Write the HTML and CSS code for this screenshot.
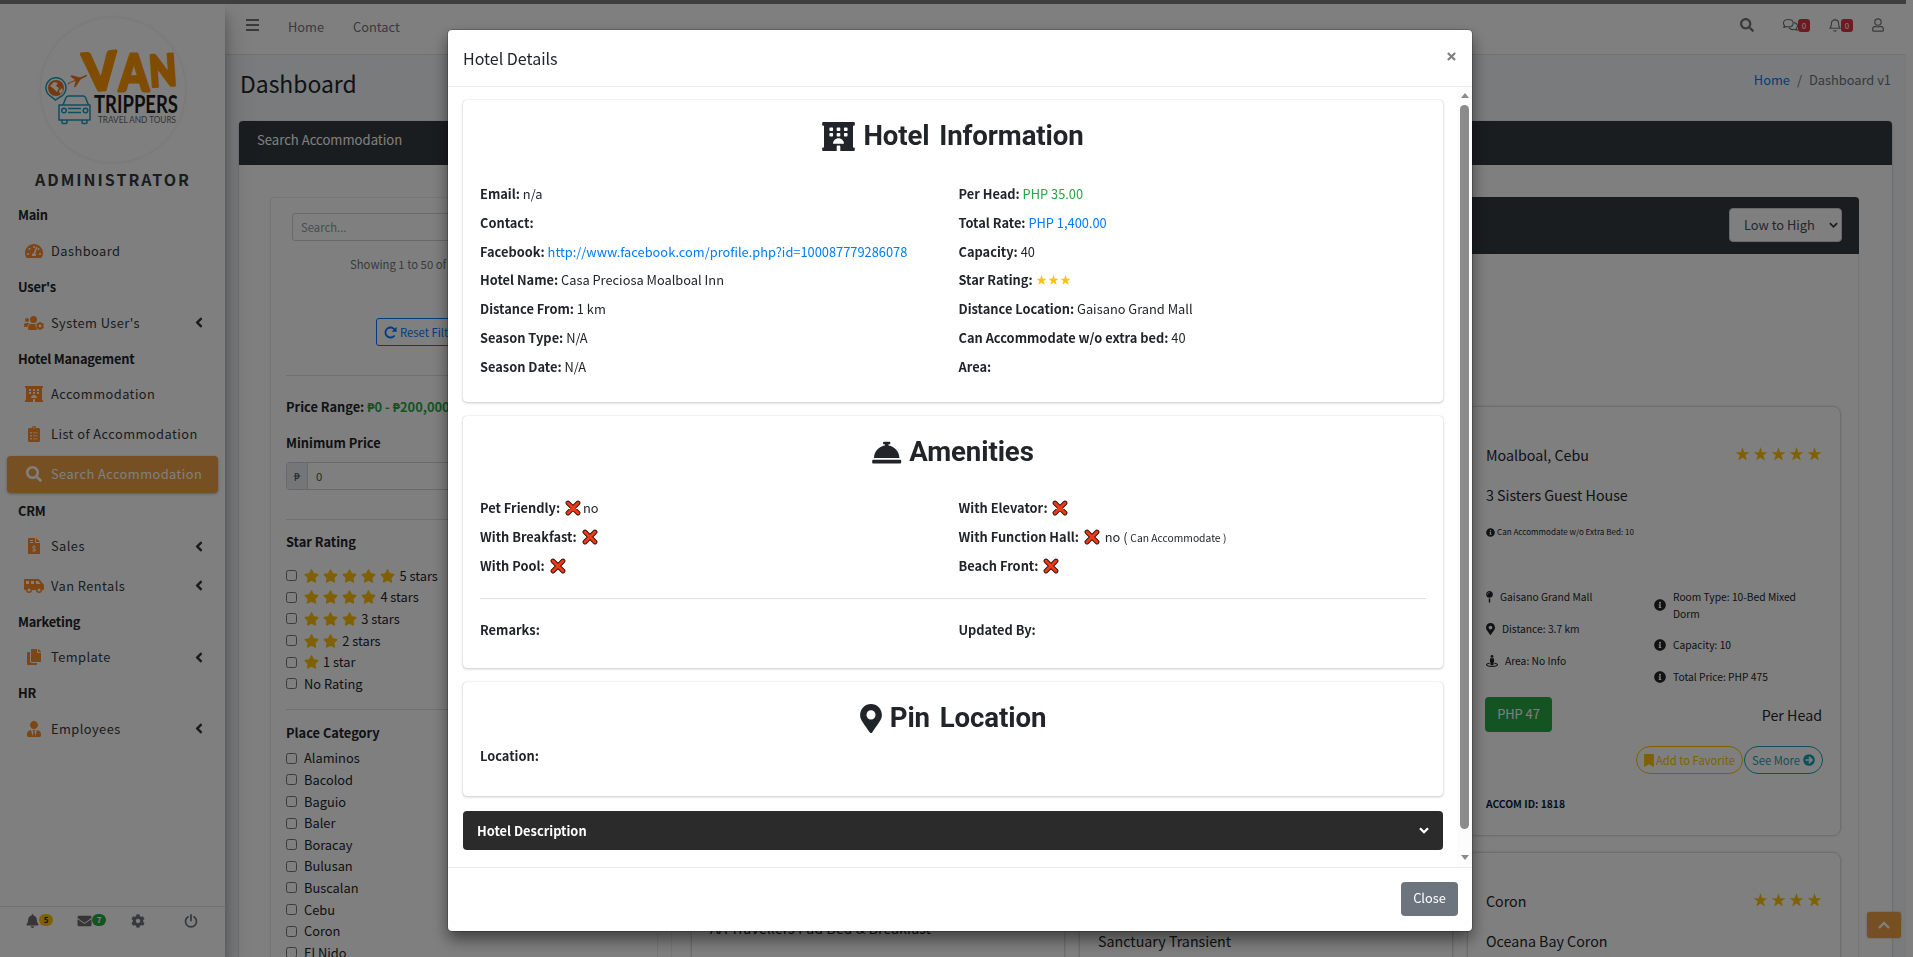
FILE: index.html
```html
<!DOCTYPE html>
<html lang="en">
<head>
<meta charset="utf-8">
<title>Van Trippers - Dashboard</title>
<link rel="stylesheet" href="styles.css">
</head>
<body>
<svg class="defs" aria-hidden="true">
  <symbol id="search" viewBox="0 0 512 512"><path d="M505 442.7L405.300 343c-4.500-4.500-10.600-7-17-7H372c27.600-35.300 44-79.700 44-128C416 93.100 322.900 0 208 0S0 93.100 0 208s93.100 208 208 208c48.300 0 92.700-16.400 128-44v16.300c0 6.400 2.500 12.500 7 17l99.700 99.700c9.400 9.400 24.600 9.400 33.900 0l28.300-28.300c9.400-9.400 9.400-24.600.1-34zM208 336c-70.700 0-128-57.200-128-128 0-70.700 57.200-128 128-128 70.700 0 128 57.200 128 128 0 70.700-57.200 128-128 128z"/></symbol>
  <symbol id="star" viewBox="0 0 576 512"><path d="M259.300 17.800L194 150.200 47.900 171.500c-26.200 3.800-36.700 36.100-17.700 54.600l105.700 103-25 145.500c-4.500 26.300 23.200 46 46.400 33.700L288 439.600l130.700 68.700c23.200 12.200 50.900-7.400 46.400-33.700l-25-145.500 105.700-103c19-18.500 8.500-50.800-17.700-54.600L382 150.200 316.700 17.800c-11.700-23.600-45.600-23.900-57.400 0z"/></symbol>
  <symbol id="sharpstar" viewBox="0 0 20 20"><path d="M10 .8l2.300 6.700h7l-5.600 4.200 2.100 6.900L10 14.500l-5.800 4.100 2.100-6.900L.7 7.500h7z"/></symbol>
  <symbol id="marker" viewBox="0 0 384 512"><path d="M172.268 501.670C26.970 291.031 0 269.413 0 192 0 85.961 85.961 0 192 0s192 85.961 192 192c0 77.413-26.970 99.031-172.268 309.670-9.535 13.774-29.930 13.773-39.464 0zM192 272c44.183 0 80-35.817 80-80s-35.817-80-80-80-80 35.817-80 80 35.817 80 80 80z"/></symbol>
  <symbol id="info" viewBox="0 0 512 512"><path d="M256 8C119.043 8 8 119.083 8 256c0 136.997 111.043 248 248 248s248-111.003 248-248C504 119.083 392.957 8 256 8zm0 110c23.196 0 42 18.804 42 42s-18.804 42-42 42-42-18.804-42-42 18.804-42 42-42zm56 254c0 6.627-5.373 12-12 12h-88c-6.627 0-12-5.373-12-12v-24c0-6.627 5.373-12 12-12h12v-64h-12c-6.627 0-12-5.373-12-12v-24c0-6.627 5.373-12 12-12h64c6.627 0 12 5.373 12 12v100h12c6.627 0 12 5.373 12 12v24z"/></symbol>
  <symbol id="left" viewBox="0 0 256 512"><path d="M31.700 239l136-136c9.400-9.400 24.600-9.400 33.900 0l22.600 22.600c9.400 9.400 9.400 24.600 0 33.900L127.900 256l96.400 96.400c9.400 9.400 9.400 24.600 0 33.900L201.700 409c-9.400 9.400-24.600 9.400-33.900 0l-136-136c-9.500-9.400-9.500-24.600-.1-34z"/></symbol>
  <symbol id="bell" viewBox="0 0 448 512"><path d="M224 512c35.320 0 63.970-28.650 63.970-64H160.030c0 35.350 28.650 64 63.970 64zm215.390-149.710c-19.320-20.760-55.470-51.990-55.470-154.290 0-77.700-54.480-139.900-127.940-155.160V32c0-17.670-14.320-32-31.980-32s-31.980 14.330-31.980 32v20.840C118.560 68.100 64.080 130.300 64.080 208c0 102.300-36.150 133.530-55.470 154.290-6 6.450-8.660 14.160-8.610 21.710.11 16.400 12.980 32 32.100 32h383.800c19.120 0 32-15.600 32.100-32 .05-7.550-2.610-15.270-8.610-21.710z"/></symbol>
  <symbol id="envelope" viewBox="0 0 512 512"><path d="M502.300 190.800c3.900-3.100 9.700-.2 9.700 4.700V400c0 26.500-21.500 48-48 48H48c-26.500 0-48-21.500-48-48V195.600c0-5 5.700-7.800 9.700-4.700 22.400 17.400 52.100 39.500 154.100 113.600 21.100 15.400 56.700 47.800 92.200 47.600 35.700.3 72-32.800 92.300-47.600 102-74.100 131.600-96.300 154-113.700zM256 320c23.200.4 56.600-29.200 73.400-41.400 132.700-96.300 142.800-104.700 173.400-128.700 5.800-4.500 9.200-11.500 9.200-18.900v-19c0-26.500-21.500-48-48-48H48c-26.500 0-48 21.500-48 48v19c0 7.400 3.400 14.300 9.200 18.900 30.600 23.900 40.700 32.400 173.400 128.700 16.800 12.200 50.200 41.800 73.400 41.400z"/></symbol>
  <symbol id="cog" viewBox="0 0 512 512"><path d="M487.400 315.700l-42.600-24.600c4.300-23.200 4.300-47 0-70.200l42.600-24.600c4.900-2.800 7.100-8.600 5.500-14-11.100-35.600-30-67.800-54.700-94.600-3.800-4.100-10-5.100-14.800-2.300L380.800 110c-17.900-15.400-38.500-27.300-60.800-35.100V25.800c0-5.600-3.900-10.500-9.400-11.700-36.700-8.200-74.300-7.800-109.200 0-5.500 1.200-9.400 6.100-9.400 11.700V75c-22.200 7.900-42.800 19.800-60.800 35.100L88.700 85.500c-4.900-2.800-11-1.900-14.800 2.300-24.700 26.700-43.600 58.900-54.700 94.600-1.700 5.400.6 11.200 5.500 14L67.300 221c-4.300 23.200-4.300 47 0 70.200l-42.600 24.600c-4.900 2.800-7.100 8.600-5.500 14 11.100 35.600 30 67.800 54.700 94.600 3.800 4.100 10 5.100 14.800 2.300l42.600-24.600c17.900 15.400 38.500 27.300 60.800 35.100v49.200c0 5.600 3.900 10.500 9.400 11.700 36.700 8.200 74.300 7.800 109.200 0 5.500-1.200 9.400-6.100 9.400-11.700v-49.200c22.200-7.900 42.800-19.800 60.800-35.100l42.600 24.600c4.900 2.800 11 1.900 14.800-2.300 24.700-26.700 43.600-58.900 54.700-94.600 1.500-5.500-.7-11.300-5.600-14.100zM256 336c-44.100 0-80-35.900-80-80s35.900-80 80-80 80 35.900 80 80-35.900 80-80 80z"/></symbol>
  <symbol id="power" viewBox="0 0 16 16"><path fill="none" stroke="currentColor" stroke-width="2" stroke-linecap="round" d="M4.600 3.200a6.300 6.300 0 1 0 6.800 0M8 1v6.500"/></symbol>
  <symbol id="bells" viewBox="0 0 576 512"><path d="M288 130.540V112h16c8.840 0 16-7.160 16-16V80c0-8.840-7.160-16-16-16h-96c-8.840 0-16 7.160-16 16v16c0 8.840 7.160 16 16 16h16v18.540C115.490 146.110 32 239.180 32 352h448c0-112.820-83.490-205.890-192-221.460zM496 384H16c-8.840 0-16 7.160-16 16v32c0 8.840 7.160 16 16 16h480c8.840 0 16-7.160 16-16v-32c0-8.840-7.160-16-16-16z"/></symbol>
  <symbol id="hotel" viewBox="0 0 576 512"><path d="M560 64c8.840 0 16-7.160 16-16V16c0-8.840-7.160-16-16-16H16C7.160 0 0 7.160 0 16v32c0 8.840 7.160 16 16 16h15.980v384H16c-8.840 0-16 7.160-16 16v32c0 8.840 7.160 16 16 16h240v-80c0-8.800 7.200-16 16-16h32c8.800 0 16 7.200 16 16v80h240c8.840 0 16-7.160 16-16v-32c0-8.840-7.160-16-16-16h-16V64h16zm-304 44.800c0-6.400 6.400-12.800 12.800-12.800h38.400c6.400 0 12.800 6.400 12.800 12.800v38.400c0 6.400-6.400 12.800-12.800 12.800h-38.400c-6.400 0-12.800-6.400-12.800-12.800v-38.400zm0 96c0-6.400 6.400-12.800 12.800-12.800h38.400c6.400 0 12.800 6.400 12.800 12.800v38.400c0 6.400-6.400 12.800-12.800 12.800h-38.400c-6.400 0-12.800-6.400-12.800-12.800v-38.400zm-128-96c0-6.400 6.400-12.800 12.800-12.800h38.400c6.400 0 12.800 6.400 12.800 12.800v38.400c0 6.400-6.400 12.800-12.800 12.800h-38.400c-6.400 0-12.800-6.400-12.800-12.800v-38.400zM179.200 256h-38.400c-6.400 0-12.800-6.400-12.800-12.800v-38.400c0-6.400 6.400-12.800 12.800-12.800h38.400c6.400 0 12.800 6.400 12.800 12.800v38.400c0 6.400-6.400 12.800-12.800 12.800zM192 384c0-53.020 42.980-96 96-96s96 42.980 96 96H192zm256-140.800c0 6.400-6.400 12.800-12.800 12.800h-38.400c-6.400 0-12.800-6.400-12.800-12.800v-38.400c0-6.400 6.400-12.800 12.800-12.800h38.400c6.400 0 12.800 6.400 12.800 12.800v38.400zm0-96c0 6.400-6.400 12.800-12.800 12.800h-38.400c-6.400 0-12.800-6.400-12.800-12.800v-38.400c0-6.400 6.400-12.800 12.800-12.800h38.400c6.400 0 12.800 6.400 12.800 12.800v38.400z"/></symbol>
  <symbol id="gauge" viewBox="0 0 576 512"><path fill-rule="evenodd" d="M288 32C129 32 0 161 0 320c0 52.800 14.200 102.300 39 144.800 5.600 9.600 16.300 15.200 27.500 15.200h443c11.100 0 21.800-5.600 27.400-15.200C561.800 422.300 576 372.800 576 320 576 161 447 32 288 32zM288 96a32 32 0 1 1 0 64 32 32 0 0 1 0-64zM96 320a32 32 0 1 1 0 64 32 32 0 0 1 0-64zM144 160a32 32 0 1 1 0 64 32 32 0 0 1 0-64zM480 320a32 32 0 1 1 0 64 32 32 0 0 1 0-64zM432 160a32 32 0 1 1 0 64 32 32 0 0 1 0-64zM391 152l-61 184c13 11 22 28 22 48 0 12-3 23-9 32H233c-6-9-9-20-9-32 0-34 26-61 60-64l61-184c14-24 48-10 46 16z"/></symbol>
  <symbol id="users" viewBox="0 0 640 512"><circle cx="96" cy="160" r="64"/><circle cx="304" cy="144" r="112"/><path d="M0 320c0-40 25-64 64-64h64c20 0 36 8 48 20-40 24-68 60-72 108H32c-18 0-32-14-32-32zM128 448c-2-100 36-164 110-168 40 18 90 18 130 2-18 40 0 60 10 70-14 48 10 90 46 108 0 10 0 20-4 20H176c-27 0-48-8-48-32z"/><circle cx="512" cy="352" r="78" fill="none" stroke="currentColor" stroke-width="64"/><path fill="none" stroke="currentColor" stroke-width="50" d="M512 224v40M512 440v40M401 288l35 20M588 396l35 20M401 416l35-20M588 308l35-20"/></symbol>
  <symbol id="clip" viewBox="0 0 384 512"><path fill-rule="evenodd" d="M336 64h-80a64 64 0 0 0-128 0H48c-26 0-48 22-48 48v352c0 26 22 48 48 48h288c26 0 48-22 48-48V112c0-26-22-48-48-48zM192 40a24 24 0 1 1 0 48 24 24 0 0 1 0-48zM72 192h48v48H72zM160 204h144v24H160zM72 288h48v48H72zM160 300h144v24H160zM72 384h48v48H72zM160 396h144v24H160z"/></symbol>
  <symbol id="invoice" viewBox="0 0 384 512"><path fill-rule="evenodd" d="M24 0h200v136c0 13 11 24 24 24h136v328c0 13-11 24-24 24H24c-13 0-24-11-24-24V24C0 11 11 0 24 0zM64 64v32h96V64zM64 128v32h96v-32zM256 0l128 128H256z"/><path fill="none" stroke="#fff" stroke-width="28" d="M246 280c-20-20-104-26-104 22 0 50 108 22 108 74 0 48-84 48-112 20M192 232v210"/></symbol>
  <symbol id="van" viewBox="0 0 640 512"><path fill-rule="evenodd" d="M628 210L494 50c-9-11-23-18-37-18H32C14 32 0 46 0 64v288c0 18 14 32 32 32h32a96 96 0 0 0 192 0h128a96 96 0 0 0 192 0h32c18 0 32-14 32-32V241c0-11-4-22-12-31zM64 192V96h96v96zM160 432a48 48 0 1 1 0-96 48 48 0 0 1 0 96zM320 192h-96V96h96zM480 432a48 48 0 1 1 0-96 48 48 0 0 1 0 96zM384 192V96h66l80 96z"/></symbol>
  <symbol id="copy" viewBox="0 0 448 512"><path d="M320 448v40c0 13.255-10.745 24-24 24H24c-13.255 0-24-10.745-24-24V120c0-13.255 10.745-24 24-24h72v296c0 30.879 25.121 56 56 56h168zm0-344V0H152c-13.255 0-24 10.745-24 24v368c0 13.255 10.745 24 24 24h272c13.255 0 24-10.745 24-24V128H344c-13.200 0-24-10.800-24-24zm120.971-31.029L375.029 7.029A24 24 0 0 0 358.059 0H352v96h96v-6.059a24 24 0 0 0-7.029-16.970z"/></symbol>
  <symbol id="tie" viewBox="0 0 448 512"><path d="M224 256c70.700 0 128-57.300 128-128S294.700 0 224 0 96 57.300 96 128s57.300 128 128 128zm95.800 32.600L272 480l-32-136 32-56h-96l32 56-32 136-47.800-191.400C56.900 292 0 350.300 0 422.400V464c0 26.500 21.500 48 48 48h352c26.500 0 48-21.500 48-48v-41.600c0-72.100-56.900-130.400-128.200-133.800z"/></symbol>
  <symbol id="bookmark" viewBox="0 0 384 512"><path d="M0 512V48C0 21.490 21.490 0 48 0h288c26.510 0 48 21.490 48 48v464L192 400 0 512z"/></symbol>
  <symbol id="pin" viewBox="0 0 288 512"><path d="M112 316.940v156.690l22.020 33.020c4.750 7.120 15.220 7.120 19.970 0L176 473.630V316.940c-10.390 1.920-21.060 3.060-32 3.060s-21.610-1.140-32-3.060zM144 0C64.470 0 0 64.470 0 144s64.470 144 144 144 144-64.470 144-144S223.530 0 144 0zm0 76c-37.500 0-68 30.500-68 68 0 6.620-5.380 12-12 12s-12-5.380-12-12c0-50.730 41.280-92 92-92 6.620 0 12 5.380 12 12s-5.380 12-12 12z"/></symbol>
  <symbol id="street" viewBox="0 0 512 512"><circle cx="256" cy="60" r="60"/><path d="M208 136h96c22 0 40 18 40 40v104c0 13-9 22-20 26v104c0 13-10 22-22 22h-92c-12 0-22-9-22-22V306c-11-4-20-13-20-26V176c0-22 18-40 40-40z"/><path fill="none" stroke="currentColor" stroke-width="44" stroke-linecap="round" d="M140 350C60 362 22 385 22 410c0 45 110 78 234 78s234-33 234-78c0-25-38-48-118-60"/></symbol>
  <symbol id="arrow" viewBox="0 0 16 16"><path fill-rule="evenodd" d="M8 .2a7.800 7.800 0 1 1 0 15.600A7.800 7.800 0 0 1 8 .2zM7.200 4.600l2 2.300H3.400v2.200h5.800l-2 2.300 1.600 1.500L13.400 8 8.800 3.100z"/></symbol>
  <symbol id="redo" viewBox="0 0 16 16"><path fill="none" stroke="currentColor" stroke-width="2.300" d="M13 11.600a6.200 6.200 0 1 1 .2-6.900"/><path d="M15.500 1v6h-6z"/></symbol>
  <symbol id="cross" viewBox="0 0 16 16"><path fill="none" stroke="#2b1512" stroke-width="4.800" stroke-linecap="round" d="M3 3l10 10M13 3L3 13"/><path fill="none" stroke="#f03a17" stroke-width="3" stroke-linecap="round" d="M3 3l10 10M13 3L3 13"/></symbol>
  <symbol id="comments" viewBox="0 0 18 16"><g fill="none" stroke="currentColor" stroke-width="1.300" stroke-linejoin="round"><path d="M6.500 1.700c3.300 0 5.600 1.800 5.600 4.200s-2.300 4.200-5.600 4.200c-.9 0-1.700-.1-2.400-.4-.8.600-1.900 1-3 1 .6-.7 1-1.400 1.100-2.200C1.400 7.800.9 6.900.9 5.900c0-2.400 2.300-4.200 5.600-4.200z"/><path d="M13 5.300c2.400.4 4 1.700 4 3.700 0 1-.5 1.900-1.300 2.600.1.800.5 1.500 1.100 2.200-1.100 0-2.200-.4-3-1-2.500.8-5.300 0-6.400-1.800"/></g></symbol>
  <symbol id="bello" viewBox="0 0 14 16"><path fill="none" stroke="currentColor" stroke-width="1.300" stroke-linejoin="round" d="M7 .6v1.300M7 2c2.600 0 4.200 1.900 4.200 4.400 0 3.200.8 4.200 1.900 5.400H.9c1.100-1.200 1.900-2.200 1.900-5.400C2.800 3.900 4.400 2 7 2zM5.300 13.900c.3.900.9 1.300 1.700 1.300s1.400-.4 1.700-1.300"/></symbol>
  <symbol id="usero" viewBox="0 0 14 16"><g fill="none" stroke="currentColor" stroke-width="1.400"><circle cx="7" cy="4.600" r="3.700"/><path d="M4.200 9.700C2.200 9.800.8 11.200.8 13v1c0 .7.500 1.200 1.200 1.200h10c.7 0 1.200-.5 1.200-1.200v-1c0-1.800-1.400-3.200-3.400-3.300-1.900.7-3.700.7-5.600 0z"/></g></symbol>
</svg>

<div class="page">
  <aside class="sidebar">
    <div class="brand">
      <svg viewBox="0 0 144 144" width="144" height="144">
        <g class="van-word" font-size="52"><text x="44" y="72" textLength="34" lengthAdjust="spacingAndGlyphs" transform="rotate(-5 60 72)">V</text><text x="78" y="73" textLength="30" lengthAdjust="spacingAndGlyphs">A</text><text x="109" y="68" font-size="43" textLength="27" lengthAdjust="spacingAndGlyphs" transform="rotate(-4 120 60)">N</text></g>
        <text class="trip-word" x="53" y="95" textLength="84" lengthAdjust="spacingAndGlyphs">TRIPPERS</text>
        <text class="tour-word" x="57" y="105" textLength="78" lengthAdjust="spacingAndGlyphs">TRAVEL AND TOURS</text>
        <g fill="none" stroke="#1c9cc0" stroke-width="1.500" stroke-linejoin="round"><path d="M22 87l3-7.500c.6-1.200 1.300-1.500 2.500-1.500H42c1.200 0 2 .4 2.500 1.500l3 7.500M18 87h31v15H18zM21 102v2.500q0 1 1 1h3q1 0 1-1V102M41 102v2.500q0 1 1 1h3q1 0 1-1V102M27 90.500h13M27 94.500h13"/><circle cx="23" cy="92.500" r="2.300"/><circle cx="44.500" cy="92.500" r="2.300"/></g>
        <circle cx="15" cy="70" r="8" fill="#e8721c"/><path fill="#fff" d="M9 68l4-4 4 1-2 3 3 2-2 4-3-3zM18 73l3-3 1 3-3 3z"/>
        <path fill="none" stroke="#1c9cc0" stroke-width="1.500" d="M10.500 78.800A10 10 0 1 1 19 79l-4.500 3z"/>
        <path fill="#f0761c" d="M27 65l7-3-5-4 2-.8 8 2.300 6-2.500c2-.6 1.200 1.200 0 1.600l-5.500 2.800-5 7.600-1.500.3 1.700-6.600-6 2.500-2 2z"/>
      </svg>
    </div>
    <div class="admin">ADMINISTRATOR</div>
    <nav class="menu">
      <div class="mh">Main</div>
      <div class="mi"><svg class="ic w18"><use href="#gauge"/></svg>Dashboard</div>
      <div class="mh">User's</div>
      <div class="mi tree"><svg class="ic w20"><use href="#users"/></svg>System User's<svg class="caret"><use href="#left"/></svg></div>
      <div class="mh">Hotel Management</div>
      <div class="mi"><svg class="ic w18"><use href="#hotel"/></svg>Accommodation</div>
      <div class="mi"><svg class="ic w12"><use href="#clip"/></svg>List of Accommodation</div>
      <div class="mi active"><svg class="ic w16"><use href="#search"/></svg>Search Accommodation</div>
      <div class="mh">CRM</div>
      <div class="mi tree"><svg class="ic w12"><use href="#invoice"/></svg>Sales<svg class="caret"><use href="#left"/></svg></div>
      <div class="mi tree"><svg class="ic w20"><use href="#van"/></svg>Van Rentals<svg class="caret"><use href="#left"/></svg></div>
      <div class="mh">Marketing</div>
      <div class="mi tree"><svg class="ic w14"><use href="#copy"/></svg>Template<svg class="caret"><use href="#left"/></svg></div>
      <div class="mh">HR</div>
      <div class="mi tree"><svg class="ic w14"><use href="#tie"/></svg>Employees<svg class="caret"><use href="#left"/></svg></div>
    </nav>
    <div class="sfoot">
      <span class="sf"><svg class="fi b1"><use href="#bell"/></svg><b class="pill yellow">5</b></span>
      <span class="sf"><svg class="fi b2"><use href="#envelope"/></svg><b class="pill green">7</b></span>
      <span class="sf"><svg class="fi b3"><use href="#cog"/></svg></span>
      <span class="sf"><svg class="fi b4"><use href="#power"/></svg></span>
    </div>
  </aside>

  <div class="content">
    <header class="navbar">
      <div class="burger"><i></i><i></i><i></i></div>
      <span class="n1">Home</span><span class="n2">Contact</span>
      <div class="right">
        <svg class="q1"><use href="#search"/></svg>
        <svg class="q2"><use href="#comments"/></svg><b class="nb">0</b>
        <svg class="q3"><use href="#bello"/></svg><b class="nb">0</b>
        <svg class="q4"><use href="#usero"/></svg>
      </div>
    </header>
    <div class="titlebar"><h1>Dashboard</h1><div class="crumb"><a>Home</a><span>/</span>Dashboard v1</div></div>
    <main class="card">
      <div class="cardhead">Search Accommodation</div>
      <div class="cardbody">
        <section class="filters">
          <div class="searchbox">Search...</div>
          <p class="showing">Showing 1 to 50 of 1818 results</p>
          <div class="resetrow"><span class="reset"><svg><use href="#redo"/></svg>Reset Filters</span></div>
          <hr>
          <h4 class="pr">Price Range: <em>₱0 - ₱200,000</em></h4>
          <h4 class="mp">Minimum Price</h4>
          <div class="igroup"><span>₱</span><div>0</div></div>
          <hr class="h2">
          <h4 class="sr">Star Rating</h4>
          <div class="checks stars">
            <label><i></i><svg><use href="#star"/></svg><svg><use href="#star"/></svg><svg><use href="#star"/></svg><svg><use href="#star"/></svg><svg><use href="#star"/></svg>5 stars</label>
            <label><i></i><svg><use href="#star"/></svg><svg><use href="#star"/></svg><svg><use href="#star"/></svg><svg><use href="#star"/></svg>4 stars</label>
            <label><i></i><svg><use href="#star"/></svg><svg><use href="#star"/></svg><svg><use href="#star"/></svg>3 stars</label>
            <label><i></i><svg><use href="#star"/></svg><svg><use href="#star"/></svg>2 stars</label>
            <label><i></i><svg><use href="#star"/></svg>1 star</label>
            <label><i></i>No Rating</label>
          </div>
          <hr class="h3">
          <h4 class="pc">Place Category</h4>
          <div class="checks">
            <label><i></i>Alaminos</label><label><i></i>Bacolod</label><label><i></i>Baguio</label><label><i></i>Baler</label><label><i></i>Boracay</label><label><i></i>Bulusan</label><label><i></i>Buscalan</label><label><i></i>Cebu</label><label><i></i>Coron</label><label><i></i>El Nido</label>
          </div>
        </section>
        <section class="results">
          <div class="rhead"><div class="select">Low to High<svg viewBox="0 0 10 8"><path fill="none" stroke="#343a40" stroke-width="2" d="M1 2l4 4 4-4"/></svg></div></div>
          <div class="grid">
            <article class="hotel"></article>
            <article class="hotel"></article>
            <article class="hotel">
              <div class="hrow"><span>Moalboal, Cebu</span><span class="hs"><svg><use href="#sharpstar"/></svg><svg><use href="#sharpstar"/></svg><svg><use href="#sharpstar"/></svg><svg><use href="#sharpstar"/></svg><svg><use href="#sharpstar"/></svg></span></div>
              <div class="hname">3 Sisters Guest House</div>
              <div class="hacc"><svg><use href="#info"/></svg>Can Accommodate w/o Extra Bed: 10</div>
              <div class="hinfo">
                <ul>
                  <li><svg class="p1"><use href="#pin"/></svg>Gaisano Grand Mall</li>
                  <li><svg class="p2"><use href="#marker"/></svg>Distance: 3.7 km</li>
                  <li><svg class="p3"><use href="#street"/></svg>Area: No Info</li>
                </ul>
                <ul class="rt">
                  <li class="two"><svg><use href="#info"/></svg><span>Room Type: 10-Bed Mixed<br>Dorm</span></li>
                  <li><svg><use href="#info"/></svg>Capacity: 10</li>
                  <li><svg><use href="#info"/></svg>Total Price: PHP 475</li>
                </ul>
              </div>
              <div class="price"><span class="php">PHP 47</span><span>Per Head</span></div>
              <div class="acts"><span class="fav"><svg><use href="#bookmark"/></svg>Add to Favorite</span><span class="more">See More<svg><use href="#arrow"/></svg></span></div>
              <div class="aid">ACCOM ID: 1818</div>
            </article>
            <article class="hotel tight"><div class="hname">AA Travellers Pad Bed &amp; Breakfast</div></article>
            <article class="hotel"><div class="hrow"></div><div class="hname">Sanctuary Transient</div></article>
            <article class="hotel">
              <div class="hrow"><span>Coron</span><span class="hs"><svg><use href="#sharpstar"/></svg><svg><use href="#sharpstar"/></svg><svg><use href="#sharpstar"/></svg><svg><use href="#sharpstar"/></svg></span></div>
              <div class="hname">Oceana Bay Coron</div>
            </article>
          </div>
        </section>
      </div>
    </main>
  </div>
</div>
<div class="totop"><svg viewBox="0 0 12 8"><path fill="none" stroke="#fff" stroke-width="2.400" d="M1 7l5-5 5 5"/></svg></div>
<div class="backdrop"></div>

<div class="modal">
  <div class="mhead"><h5>Hotel Details</h5><svg viewBox="0 0 10 10"><path stroke="#7f7f7f" stroke-width="2.400" d="M1 1l8 8M9 1L1 9"/></svg></div>
  <div class="mbody">
    <div class="scroll">
      <section class="box s1">
        <h2><svg class="g1"><use href="#hotel"/></svg>Hotel Information</h2>
        <div class="cols">
          <p><b>Email:</b> n/a</p><p><b>Per Head:</b> <span class="gr">PHP 35.00</span></p>
          <p><b>Contact:</b></p><p><b>Total Rate:</b> <span class="bl">PHP 1,400.00</span></p>
          <p><b>Facebook:</b> <span class="bl">http://www.facebook.com/profile.php?id=100087779286078</span></p><p><b>Capacity:</b> 40</p>
          <p><b>Hotel Name:</b> Casa Preciosa Moalboal Inn</p><p><b>Star Rating:</b> <svg class="st"><use href="#sharpstar"/></svg><svg class="st"><use href="#sharpstar"/></svg><svg class="st"><use href="#sharpstar"/></svg></p>
          <p><b>Distance From:</b> 1 km</p><p><b>Distance Location:</b> Gaisano Grand Mall</p>
          <p><b>Season Type:</b> N/A</p><p><b>Can Accommodate w/o extra bed:</b> 40</p>
          <p><b>Season Date:</b> N/A</p><p><b>Area:</b></p>
        </div>
      </section>
      <section class="box s2">
        <h2><svg class="g2"><use href="#bells"/></svg>Amenities</h2>
        <div class="cols">
          <p><b>Pet Friendly:</b> <svg class="x"><use href="#cross"/></svg>no</p><p><b>With Elevator:</b> <svg class="x"><use href="#cross"/></svg></p>
          <p><b>With Breakfast:</b> <svg class="x"><use href="#cross"/></svg></p><p><b>With Function Hall:</b> <svg class="x"><use href="#cross"/></svg> no ( <small>Can Accommodate )</small></p>
          <p><b>With Pool:</b> <svg class="x"><use href="#cross"/></svg></p><p><b>Beach Front:</b> <svg class="x"><use href="#cross"/></svg></p>
        </div>
        <hr>
        <div class="cols"><p><b>Remarks:</b></p><p><b>Updated By:</b></p></div>
      </section>
      <section class="box s3">
        <h2><svg class="g3"><use href="#marker"/></svg>Pin Location</h2>
        <div class="cols"><p><b>Location:</b></p></div>
      </section>
      <div class="acc"><b>Hotel Description</b><svg viewBox="0 0 10 7"><path fill="none" stroke="#fff" stroke-width="2.300" d="M1 1.200l4 4 4-4"/></svg></div>
    </div>
    <div class="sbar"><i class="up"></i><i class="thumb"></i><i class="dn"></i></div>
  </div>
  <div class="mfoot"><span class="close">Close</span></div>
</div>
</body>
</html>
```
FILE: styles.css
```css
* { box-sizing: border-box; }
html, body { height: 100%; }
body {
  margin: 0; overflow: hidden; background: #fff; color: #212529;
  font: 12.83px/20px "Noto Sans CJK SC", "Noto Sans", sans-serif;
}
h1, h2, h4, h5, p, ul { margin: 0; padding: 0; font-weight: 400; }
ul { list-style: none; }
svg { fill: currentColor; flex: none; overflow: visible; }
.defs { position: absolute; width: 0; height: 0; }

.page { display: flex; height: 957px; width: 1906px; border-top: 4px solid #7c7c7c; box-shadow: 7px 0 #fff; background: #f4f6f9; overflow: hidden; }
body { border: 0; }

/* sidebar */
.sidebar {
  width: 225px; flex: none; background: #fff; display: flex; flex-direction: column;
  box-shadow: 0 14px 28px rgba(0,0,0,.25), 0 10px 10px rgba(0,0,0,.22); z-index: 2;
}
.brand { width: 144px; height: 144px; margin: 14px 0 0 41px; border-radius: 50%; box-shadow: 0 0 5px rgba(0,0,0,.1); }
.van-word { fill: #ff9800; stroke: #ff9800; stroke-width: 3; stroke-linejoin: round; font-family: Lato, sans-serif; font-weight: 900; }
.trip-word { font: 700 25px Lato, sans-serif; fill: #1c1c1c; }
.tour-word { font: 400 8.500px Lato, sans-serif; fill: #666; }
.admin { height: 20px; margin-top: 7px; padding-left: 35px; font-weight: 700; font-size: 16px; letter-spacing: 2px; color: #343a40; }
.menu { margin-top: 11px; }
.mh { height: 32px; padding: 5px 0 0 18px; font-weight: 700; letter-spacing: -.2px; color: #212529; }
.mi { height: 37px; margin: 0 7px 3px; padding: 0 15px 0 12px; display: flex; align-items: center; letter-spacing: .45px; color: #343a40; border-radius: 4px; }
.mi.tree { margin-bottom: 2.500px; }
.mi .ic { height: 16px; color: #fd8c28; margin: 0 auto; }
.mi::before { content: none; }
.w12 { width: 12px; } .w14 { width: 14px; } .w16 { width: 16px; } .w18 { width: 18px; } .w20 { width: 20px; }
.mi .w12 { margin: 0 11px 0 9px; }
.mi .w14 { margin: 0 10px 0 8px; }
.mi .w16 { margin: 0 9px 0 7px; }
.mi .w18 { margin: 0 8px 0 6px; }
.mi .w20 { margin: 0 7px 0 5px; }
.mi.active { background: #eda045; color: #fff; box-shadow: 0 1px 3px rgba(0,0,0,.3); }
.mi.active .ic { color: #fff; }
.caret { width: 8px; height: 17px; margin-left: auto; }
.sfoot { margin-top: auto; height: 51px; border-top: 1px solid #dee2e6; display: grid; grid-template-columns: 51px 54px 53px 1fr; padding: 6px 0 0 26px; color: #6c757d; }
.sf { display: flex; align-items: flex-start; }
.fi { width: 14px; height: 14px; margin-top: 1px; }
.b1 { width: 13px; color: #6c6c6c; } .b2 { color: #6c6c6c; width: 15px; }
.b3 { margin-left: 0; }
.pill { height: 12px; width: 14px; border-radius: 6px; font-size: 8px; line-height: 12px; text-align: center; margin-top: 1px; }
.yellow { background: #ffc107; color: #212529; } .green { background: #28a745; color: #fff; }

/* top navigation */
.content { flex: 1; min-width: 0; display: flex; flex-direction: column; }
.navbar { height: 51px; flex: none; background: #fff; border-bottom: 1px solid #dee2e6; display: flex; color: #757575; }
.burger { width: 13px; margin: 15px 29px 0 21px; display: flex; flex-direction: column; gap: 3px; }
.burger i { height: 2px; background: #757575; }
.n1, .n2 { margin-top: 13px; } .n1 { width: 65px; }
.right { margin-left: auto; display: flex; padding: 13px 22px 0 0; }
.q1 { width: 14px; height: 14px; margin: 1px 28px 0 0; } .q2 { width: 17px; height: 14px; margin-top: 1px; margin-right: -1px; }
.q3 { width: 12px; height: 14px; margin: 1px 0 0 19px; } .q4 { width: 12px; height: 14px; margin: 1px 0 0 19px; }
.nb { width: 12px; height: 13px; margin-top: 2px; border-radius: 3px; background: #dc3545; color: #fff; font: 400 8px/13px "Noto Sans CJK SC", sans-serif; text-align: center; }
.titlebar { height: 66px; flex: none; display: flex; justify-content: space-between; padding: 0 15px 0 15px; }
h1 { font-size: 22.900px; line-height: 30px; margin-top: 13px; }
.crumb { margin-top: 15px; color: #6c757d; display: flex; }
.crumb a { color: #007bff; } .crumb span { margin: 0 7px; }
.card { width: 1653px; margin-left: 14px; flex: 1; background: #fff; border-radius: 4px 4px 0 0; box-shadow: 0 0 1px rgba(0,0,0,.13), 0 1px 3px rgba(0,0,0,.2); }
.cardhead { height: 44px; background: #343a40; color: #fff; padding: 9px 18px; border-radius: 4px 4px 0 0; font-size: 13.100px; }
.cardbody { display: flex; padding: 32px 0 0 31px; gap: 13px; height: 792px; }

/* filters */
.filters { width: 388px; height: 900px; border: 1px solid #ededed; border-radius: 4px; padding: 15px 15px 0; box-shadow: 0 0 1px rgba(0,0,0,.13); }
.searchbox { height: 28px; margin: 0 6px; border: 1px solid #ced4da; border-radius: 3px; padding: 3px 8px; font-size: 11.300px; color: #939ba2; }
.showing { margin: 13px 0 0 64px; font-size: 11.300px; color: #6c757d; line-height: 20px; height: 20px; }
.resetrow { height: 28px; margin: 44px 0 29px 90px; }
.reset { display: inline-flex; align-items: center; height: 28px; width: 104px; border: 1px solid #007bff; border-radius: 3px; color: #007bff; font-size: 11.300px; padding-left: 7px; }
.reset svg { width: 13px; height: 13px; margin-right: 3px; }
.filters hr { border: 0; border-top: 1px solid #e0e0e0; margin: 0; }
h4 { font-size: 12.830px; font-weight: 700; height: 20px; }
h4 em { font-style: normal; color: #28a745; }
.pr { margin-top: 21px; } .mp { margin-top: 16px; }
.igroup { display: flex; margin-top: 9px; height: 28px; border: 1px solid #ced4da; border-radius: 3px; font-size: 11.300px; line-height: 26px; }
.igroup span { width: 21px; text-align: center; background: #e9ecef; border-right: 1px solid #ced4da; color: #495057; }
.igroup div { padding-left: 8px; color: #495057; }
.filters .h2 { margin-top: 29px; }
.sr { margin-top: 12px; }
.checks label { display: flex; align-items: center; height: 21.600px; }
.checks i { width: 11px; height: 11px; border: 1px solid #767676; border-radius: 2.500px; margin-right: 7px; }
.checks svg { width: 15px; height: 14px; margin-right: 4.100px; color: #ffc107; }
.stars { margin-top: 13px; }
.filters .h3 { margin-top: 14px; }
.pc { margin: 13px 0 5px; }

/* results */
.results { width: 1188px; border: 1px solid #ededed; border-top: 0; height: 900px; flex: none; }
.rhead { height: 57px; background: #343a40; border-radius: 4px 4px 0 0; display: flex; justify-content: flex-end; padding: 11px 17px 0 0; margin: 0 -1px; }
.select { width: 113px; height: 34px; background: #fff; border: 1px solid #ced4da; border-radius: 4px; padding: 6px 0 0 14px; color: #495057; display: flex; }
.select svg { width: 9px; height: 8px; margin: 6px 0 0 14px; }
.grid { display: grid; grid-template-columns: repeat(3, 374px); grid-template-rows: 430px 430px; column-gap: 14px; row-gap: 15.500px; margin: 152px 0 0 19px; }
.hotel { border: 1px solid #dcdcdc; border-radius: 8px; box-shadow: 0 0 2px rgba(0,0,0,.2); padding: 38px 18px 0; font-size: 14.250px; }
.hrow { display: flex; justify-content: space-between; height: 20px; }
.hs { display: flex; gap: 3px; color: #ffc107; margin-top: 1px; } .hs svg { width: 15px; height: 16px; }
.hname { margin-top: 20px; height: 20px; }
.tight { padding-top: 45px; } .tight .hname { margin-top: 20px; }
.hacc { margin-top: 18px; height: 18px; font-size: 8.080px; line-height: 18px; display: flex; align-items: center; }
.hacc svg { width: 9px; height: 9px; margin-right: 2px; }
.hinfo { display: flex; font-size: 10.250px; margin-top: 47px; height: 109px; }
.hinfo ul { width: 175px; }
.hinfo li { height: 17px; line-height: 17px; margin-bottom: 15px; display: flex; align-items: center; }
.hinfo .rt li { margin-bottom: 15px; } .hinfo .rt .two { height: 34px; margin-bottom: 14px; }
.hinfo .rt { white-space: nowrap; }
.rt svg { width: 12px; height: 12px; margin-right: 7px; }
.p1 { width: 7px; height: 12px; margin-right: 7px; } .p2 { width: 9px; height: 12px; margin-right: 7px; } .p3 { width: 12px; height: 12px; margin-right: 7px; }
.price { display: flex; justify-content: space-between; line-height: 36px; }
.php { width: 67px; height: 35px; line-height: 34px; text-align: center; font-size: 12.830px; background: #28a745; color: #fff; border-radius: 4px; margin-left: -1px; }
.acts { display: flex; justify-content: flex-end; gap: 1px; font-size: 11.220px; margin: 13px -1px 0 0; }
.fav, .more { height: 28px; border: 1px solid #ffc107; color: #ffc107; border-radius: 14px; display: flex; align-items: center; padding: 0 7px; }
.fav { width: 107px; } .fav svg { width: 10px; height: 13px; margin-right: 2px; white-space: nowrap; }
.more { width: 79px; border-color: #17a2b8; color: #17a2b8; } .more svg { width: 12px; height: 12px; margin-left: 3px; }
.aid { margin-top: 20px; font-size: 10.300px; font-weight: 700; color: #001f3f; }
.totop { position: absolute; left: 1867px; top: 912px; width: 34px; height: 26px; background: #eda045; border-radius: 3px; display: flex; align-items: center; justify-content: center; box-shadow: 0 0 2px rgba(0,0,0,.3); }
.totop svg { width: 12px; height: 8px; }
.backdrop { position: fixed; inset: 0; background: rgba(0,0,0,.5); z-index: 5; }

/* modal */
.modal { position: fixed; z-index: 6; left: 448px; top: 30px; width: 1024px; height: 901px; background: #fff; border-radius: 4px; box-shadow: 0 0 0 1px rgba(0,0,0,.2), 0 8px 16px rgba(0,0,0,.5); display: flex; flex-direction: column; }
.mhead { height: 57px; border-bottom: 1px solid #e9ecef; display: flex; justify-content: space-between; padding: 0 16px 0 15px; flex: none; }
h5 { font-size: 16px; line-height: 24px; margin-top: 16px; }
.mhead svg { width: 9px; height: 9px; margin-top: 22px; }
.mbody { display: flex; flex: 1; }
.scroll { flex: 1; padding: 13px 14px 0 15px; }
.box { border-radius: 4px; box-shadow: 0 0 1px rgba(0,0,0,.25), 0 1px 3px rgba(0,0,0,.2); padding: 0 17px; margin-bottom: 14px; }
.s1 { height: 302px; } .s2 { height: 252px; } .s3 { height: 114px; margin-bottom: 15px; }
h2 { font: 700 27.600px/36px Roboto, sans-serif; word-spacing: 3px; letter-spacing: -.1px; height: 36px; display: flex; justify-content: center; align-items: center; }
.s1 h2 { padding-top: 36px; margin-bottom: 44px; } .s2 h2 { padding-top: 36px; margin-bottom: 42px; } .s3 h2 { padding-top: 36px; margin-bottom: 24px; }
.g1 { width: 33px; height: 29px; margin-right: 8px; } .g2 { width: 33px; height: 29px; margin-right: 4px; } .g3 { width: 22px; height: 29px; margin-right: 8px; }
.cols { display: grid; grid-template-columns: 478.500px 1fr; grid-auto-rows: 28.800px; }
.cols p { line-height: 28px; white-space: pre; }
.gr { color: #28a745; } .bl { color: #007bff; }
.st { width: 11px; height: 12px; margin: 0 1px 0 0; color: #ffc107; vertical-align: -1px; }
.x { width: 16px; height: 16px; vertical-align: -3px; margin: 0 2px; }
small { font-size: 10.300px; }
.box hr { border: 0; border-top: 1px solid #e1e1e1; margin: 18px 0 17px; }
.acc { height: 39px; background: #2b2b2b; color: #fff; border-radius: 4px; display: flex; justify-content: space-between; align-items: center; padding: 0 14px; }
.acc svg { width: 10px; height: 7px; }
.sbar { width: 15px; background: #fcfcfc; display: flex; flex-direction: column; padding: 6px 3px 7px; align-items: center; }
.up, .dn { border: 4.500px solid transparent; height: 0; width: 0; }
.up { border-top: 0; border-bottom: 5px solid #8b8b8b; }
.dn { border-bottom: 0; border-top: 5px solid #8b8b8b; margin-top: auto; }
.thumb { width: 9px; height: 724px; border-radius: 5px; background: #8b8b8b; margin-top: 7px; }
.mfoot { height: 64px; flex: none; border-top: 1px solid #e9ecef; display: flex; justify-content: flex-end; padding: 14px 14px 0; }
.close { width: 57px; height: 34px; line-height: 32px; border-radius: 4px; background: #6c757d; color: #fff; text-align: center; }
```
